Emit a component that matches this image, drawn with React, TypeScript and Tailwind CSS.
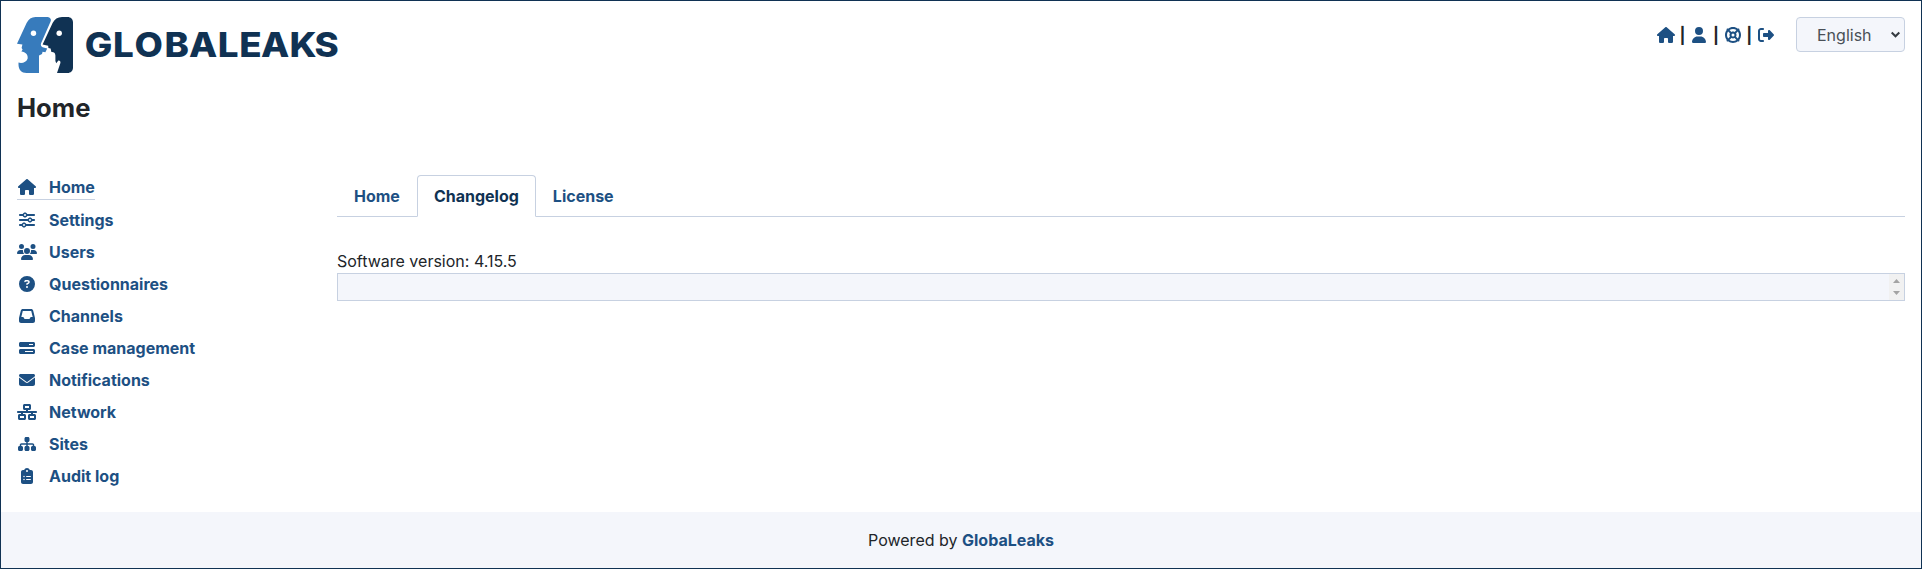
import React from "react";
import {
  FaHouse, FaSliders, FaUsers, FaCircleQuestion, FaInbox, FaBarsProgress, FaEnvelope,
  FaNetworkWired, FaSitemap, FaClipboardList, FaUser, FaLifeRing, FaRightFromBracket,
} from "react-icons/fa6";

const nav = [
  { label: "Home", icon: <FaHouse className="h-4 w-[18px] shrink-0" /> },
  { label: "Settings", icon: <FaSliders className="h-4 w-4 shrink-0" /> },
  { label: "Users", icon: <FaUsers className="h-4 w-5 shrink-0" /> },
  { label: "Questionnaires", icon: <FaCircleQuestion className="h-4 w-4 shrink-0" /> },
  { label: "Channels", icon: <FaInbox className="h-4 w-4 shrink-0" /> },
  { label: "Case management", icon: <FaBarsProgress className="h-4 w-4 shrink-0" /> },
  { label: "Notifications", icon: <FaEnvelope className="h-4 w-4 shrink-0" /> },
  { label: "Network", icon: <FaNetworkWired className="h-4 w-5 shrink-0" /> },
  { label: "Sites", icon: <FaSitemap className="h-4 w-[18px] shrink-0" /> },
  { label: "Audit log", icon: <FaClipboardList className="h-4 w-3 shrink-0" /> },
];

function Logo() {
  return (
    <svg width="322" height="56" viewBox="0 0 322 56" role="img" aria-label="GlobaLeaks">
      <path
        fill="#377bbc"
        d="M18.5 0H30C33 0 34.6 2.2 33.6 4.6L24 26.5C23.6 28 24 29.6 25.6 30.2L30.2 31.4L28.4 35.2L25.6 34.8L25 37L22 38.6V56H9.5C4.5 56 1.5 52.5 1.5 47.5V45.6C5 46.6 9.6 45.4 10.6 41.8C11.4 38 8.5 35 4.4 34.6L5.6 32.4L4.6 31L5.4 27.4L0 26.8L9.6 6C11.6 2 14.4 0 18.5 0Z"
      />
      <path
        fill="#103253"
        d="M45 0H50.5C53.8 0 56 2.2 56 5.5V50.5C56 53.8 53.8 56 50.5 56H40L43.4 46C43.8 44.4 42.8 43.2 41.4 43.4L39.2 46.2L38.4 44V38.4C38.2 35.6 36.6 34.8 34.4 35L33.6 31.4L31.4 31L31.2 28.8L25.6 27.6L35.6 6C37.6 2 40.6 0 45 0Z"
      />
      <circle cx="16.5" cy="16.3" r="2.7" fill="#fff" />
      <circle cx="42.2" cy="16.3" r="2.7" fill="#fff" />
      <text
        y="40"
        x="75.5 98.6 122 147.8 172.4 195.4 216.2 239.1 264.8 286.8"
        transform="scale(1.08 1)"
        textAnchor="middle"
        fill="#103253"
        className="font-[Inter,sans-serif] text-[34px] font-extrabold"
      >
        GLOBALEAKS
      </text>
    </svg>
  );
}

export default function App() {
  return (
    <div className="flex h-[569px] w-full flex-col border border-[#103253] bg-white font-[Inter,sans-serif] text-base leading-6 text-[#212529]">
      <header className="flex items-start justify-between px-4 pt-4">
        <div>
          <Logo />
          <h1 className="mt-[19px] text-[25.6px] leading-[31px] font-bold">Home</h1>
        </div>
        <div className="flex items-center">
          <div className="mr-[22px] flex items-center font-bold text-[#1d5083]">
            <FaHouse className="h-4 w-[18px]" />
            <span className="mr-[2px] w-[15px] text-center text-[#212529]">|</span>
            <FaUser className="h-4 w-[14px]" />
            <span className="ml-[1.5px] w-[17px] text-center text-[#212529]">|</span>
            <FaLifeRing className="h-4 w-4" />
            <span className="w-[17.5px] text-center text-[#212529]">|</span>
            <FaRightFromBracket className="h-4 w-4" />
          </div>
          <div className="relative flex h-[35px] w-[109px] items-center rounded border border-[#c7d1e1] bg-[#f4f6fb] pl-5 text-[#495057]">
            English
            <svg className="absolute top-[13px] right-1" width="9" height="8" viewBox="0 0 9 8" fill="none" stroke="#343a40" strokeWidth="2">
              <path d="M0.7 1.5L4.5 5.3L8.3 1.5" />
            </svg>
          </div>
        </div>
      </header>
      <div className="mt-[52px] flex flex-1 px-4">
        <nav className="flex w-[320px] flex-col items-start font-bold text-[#1d5083]">
          {nav.map(({ label, icon }, i) => (
            <a key={label} className={i === 0 ? "mb-1 flex items-center border-b border-[#c7d1e1]" : "flex items-center py-1"}>
              <span className="mr-3 flex w-5 justify-center">{icon}</span>
              {label}
            </a>
          ))}
        </nav>
        <main className="flex-1">
          <div className="flex border-b border-[#c7d1e1] font-bold text-[#1d5083]">
            <a className="-mb-px border border-transparent px-4 py-2">Home</a>
            <a className="-mb-px rounded-t border border-[#c7d1e1] border-b-white bg-white px-4 py-2 text-[#103253]">Changelog</a>
            <a className="-mb-px border border-transparent px-4 py-2">License</a>
          </div>
          <p className="mt-8">Software version: 4.15.5</p>
          <div className="flex h-7 justify-end border border-[#c7d1e1] bg-[#f4f6fb]">
            <div className="flex w-[15px] flex-col items-center justify-between bg-[#f1f1f1] py-[5px]">
              <svg width="7" height="4" viewBox="0 0 7 4" fill="#a3a3a3"><path d="M0 4L3.5 0L7 4Z" /></svg>
              <svg width="7" height="4" viewBox="0 0 7 4" fill="#a3a3a3"><path d="M0 0L3.5 4L7 0Z" /></svg>
            </div>
          </div>
        </main>
      </div>
      <footer className="flex h-14 items-center justify-center bg-[#f4f6fb]">
        <p>
          Powered by <a className="font-bold text-[#1d5083]">GlobaLeaks</a>
        </p>
      </footer>
    </div>
  );
}
